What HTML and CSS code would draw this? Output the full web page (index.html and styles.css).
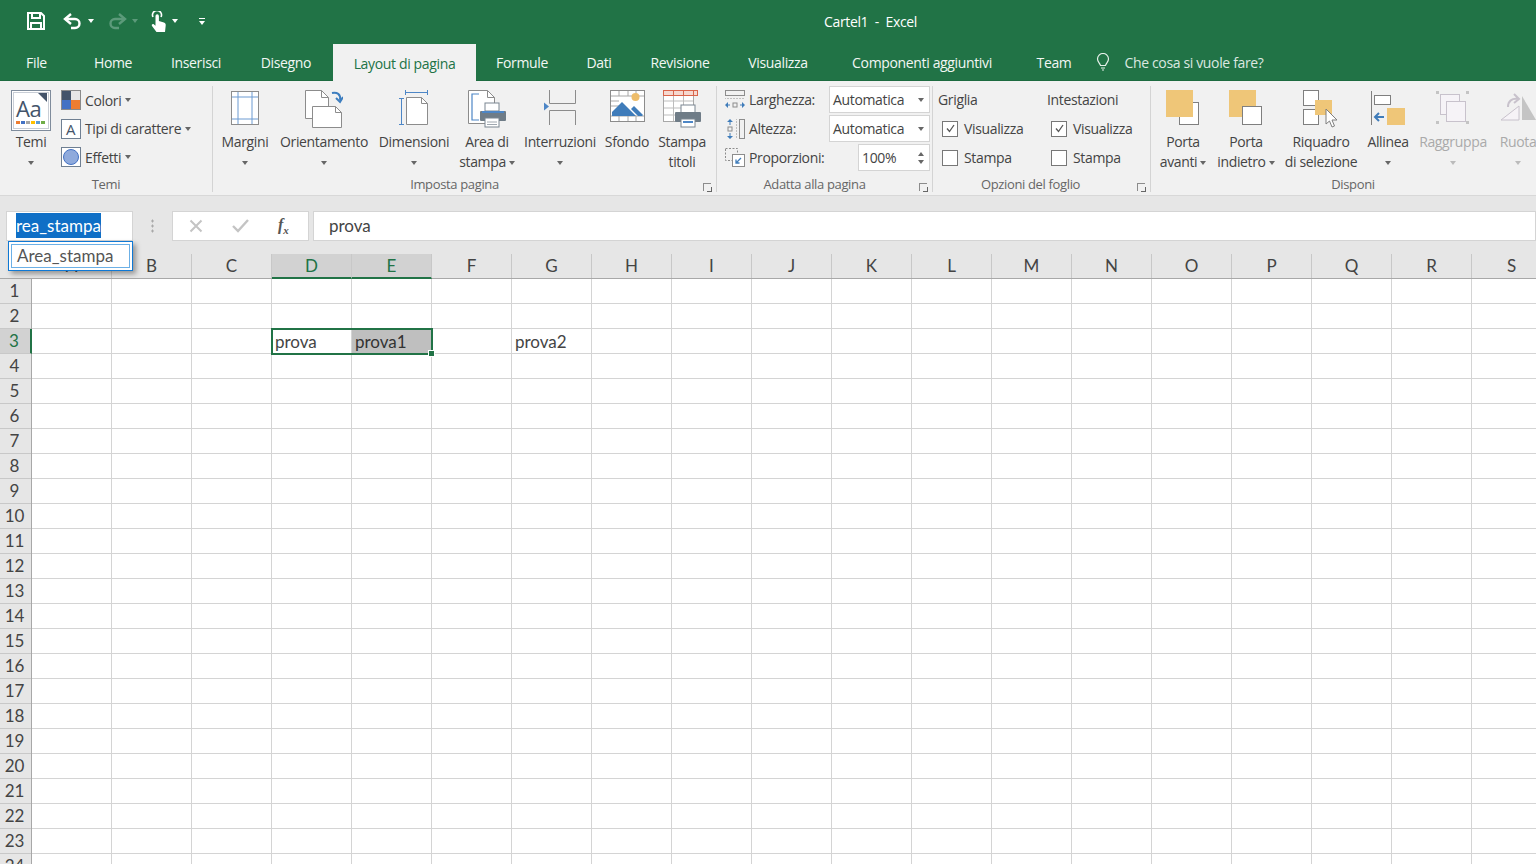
FILE: index.html
```html
<!DOCTYPE html>
<html lang="en">
	<head>
		<meta charset="UTF-8">
		<title>Cartel1 - Excel</title>
		<link rel="stylesheet" href="styles.css">
	</head>
	<body>
		<div class="title-bar">
			<div class="qat">
				<svg class="qat-save" width="18" height="18" viewBox="0 0 18 18" fill="none" stroke="#fff" stroke-width="2"><path d="M1 1h13l3 3v13H1z"/><path d="M5 1v5h8V1M4 17v-6h10v6"/></svg>
				<svg class="qat-undo" width="20" height="17" viewBox="0 0 20 17" fill="none" stroke="#fff" stroke-width="2.4"><path d="M8 1L2 6l6 5"/><path d="M2 6h10a4.500 4.500 0 0 1 0 9H8"/></svg>
				<span class="caret caret-white qat-caret"></span>
				<svg class="qat-redo" width="20" height="17" viewBox="0 0 20 17" fill="none" stroke="#5c9a7a" stroke-width="2.400"><path d="M12 1l6 5-6 5"/><path d="M18 6H8a4.500 4.500 0 0 0 0 9h4"/></svg>
				<span class="caret caret-dim qat-caret"></span>
				<svg class="qat-touch" width="17" height="21" viewBox="0 0 17 21"><path d="M3 6a4.500 4.500 0 1 1 8 0" fill="none" stroke="#fff" stroke-width="1.600"/><path d="M5.500 5a1.700 1.700 0 0 1 3.400 0v5l5 1.500c1.500.5 2 1.500 1.800 3L15 21H6.500L2 15c-.8-1.200.8-2.600 2-1.500l1.500 1.300z" fill="#fff"/></svg>
				<span class="caret caret-white qat-caret"></span>
				<div class="qat-custom"><span class="qat-custom-bar"></span><span class="caret caret-white"></span></div>
			</div>
			<div class="doc-title">Cartel1 &nbsp;-&nbsp; Excel</div>
		</div>

		<div class="tab-bar">
			<div class="tab tab-file">File</div>
			<div class="tab tab-home">Home</div>
			<div class="tab tab-ins">Inserisci</div>
			<div class="tab tab-dis">Disegno</div>
			<div class="tab tab-active">Layout di pagina</div>
			<div class="tab tab-for">Formule</div>
			<div class="tab tab-dati">Dati</div>
			<div class="tab tab-rev">Revisione</div>
			<div class="tab tab-vis">Visualizza</div>
			<div class="tab tab-comp">Componenti aggiuntivi</div>
			<div class="tab tab-team">Team</div>
			<svg class="bulb" width="14" height="18" viewBox="0 0 14 18" fill="none" stroke="#e6f0ea" stroke-width="1.200"><path d="M4.500 12.500C4 10 1.500 9 1.500 6a5.500 5.500 0 0 1 11 0c0 3-2.500 4-3 6.500z"/><path d="M5 15h4M6 17h2"/></svg>
			<div class="tab tab-tell">Che cosa si vuole fare?</div>
		</div>

		<div class="ribbon">
			<div class="group group-temi">
				<div class="group-body">
					<div class="big-btn w-temi">
						<div class="big-icon">
							<svg width="40" height="41" viewBox="0 0 40 41"><rect x=".5" y=".5" width="39" height="40" fill="#fff" stroke="#7f8c9c"/><rect x="2.500" y="2.500" width="35" height="36" fill="#fff" stroke="#c9ced6"/><path d="M27 3h9v9z" fill="#44546a"/><text x="5" y="27" class="svg-aa">Aa</text><path d="M5 31h4v3H5z" fill="#ed7d31"/><path d="M10 31h4v3h-4z" fill="#4472c4"/><path d="M15 31h4v3h-4z" fill="#a5a5a5"/><path d="M20 31h4v3h-4z" fill="#ffc000"/><path d="M25 31h4v3h-4z" fill="#5b9bd5"/><path d="M30 31h4v3h-4z" fill="#70ad47"/></svg>
						</div>
						<div class="big-label">Temi</div>
						<div class="big-label"><span class="caret"></span></div>
					</div>
					<div class="small-col">
						<div class="small-row">
							<svg width="20" height="20" viewBox="0 0 20 20"><rect width="10" height="10" fill="#44546a"/><rect x="10" width="10" height="10" fill="#e7e6e6"/><rect y="10" width="10" height="10" fill="#4472c4"/><rect x="10" y="10" width="10" height="10" fill="#ed7d31"/><rect x=".5" y=".5" width="19" height="19" fill="none" stroke="#8a8a8a"/></svg>
							<span>Colori</span><span class="caret"></span>
						</div>
						<div class="small-row">
							<svg width="20" height="20" viewBox="0 0 20 20"><rect x=".5" y=".5" width="19" height="19" fill="#fff" stroke="#6f7f92"/><text x="5" y="16" class="svg-a">A</text></svg>
							<span>Tipi di carattere</span><span class="caret"></span>
						</div>
						<div class="small-row">
							<svg width="20" height="20" viewBox="0 0 20 20"><rect x=".5" y=".5" width="19" height="19" fill="#fff" stroke="#6f7f92"/><circle cx="10" cy="10" r="7.500" fill="#8faadc" stroke="#4472c4"/></svg>
							<span>Effetti</span><span class="caret"></span>
						</div>
					</div>
				</div>
				<div class="group-label">Temi</div>
			</div>

			<div class="group group-page">
				<div class="group-body">
					<div class="big-btn w-margini">
						<div class="big-icon">
							<svg width="30" height="36" viewBox="0 0 30 36" fill="none"><rect x="1.500" y="1.500" width="27" height="33" fill="#fff" stroke="#8c8c8c"/><path d="M8 2v32M22 2v32M2 7h26M2 29h26" stroke="#6d9bd2"/></svg>
						</div>
						<div class="big-label">Margini</div>
						<div class="big-label"><span class="caret"></span></div>
					</div>
					<div class="big-btn w-orient">
						<div class="big-icon">
							<svg width="38" height="38" viewBox="0 0 38 38" fill="none" stroke="#8c8c8c"><path d="M.5.500h16l7 7v21H.5z" fill="#fff"/><path d="M16.500.5v7h7"/><path d="M7.500 16.500h23l6 6v15h-29z" fill="#fff"/><path d="M30.500 16.500v6h6"/><path d="M27 3c5-1 9 1 8 7" stroke="#3d7ebf" stroke-width="2"/><path d="M31 8l4 4 3-5" stroke="#3d7ebf" stroke-width="2"/></svg>
						</div>
						<div class="big-label">Orientamento</div>
						<div class="big-label"><span class="caret"></span></div>
					</div>
					<div class="big-btn w-dim">
						<div class="big-icon">
							<svg width="30" height="36" viewBox="0 0 30 36" fill="none"><path d="M7.500 7.500h15l6 6v21h-21z" fill="#fff" stroke="#8c8c8c"/><path d="M22.500 7.500v6h6" stroke="#8c8c8c"/><path d="M6 2.500h23M6.500 0v5M28.500 0v5M2.500 8v27M0 8.500h5M0 34.500h5" stroke="#4d86c6"/></svg>
						</div>
						<div class="big-label">Dimensioni</div>
						<div class="big-label"><span class="caret"></span></div>
					</div>
					<div class="big-btn w-area">
						<div class="big-icon">
							<svg width="38" height="38" viewBox="0 0 38 38" fill="none"><path d="M.5.500h19l7 7v26H.5z" fill="#fff" stroke="#8c8c8c"/><path d="M19.500.5v7h7" stroke="#8c8c8c"/><path d="M11 4H4v26h7" stroke="#4d86c6" stroke-width="1.200"/><rect x="17" y="13" width="14" height="8" fill="#fff" stroke="#7a8691"/><path d="M13 21h24a1 1 0 0 1 1 1v8a1 1 0 0 1-1 1H13a1 1 0 0 1-1-1v-8a1 1 0 0 1 1-1z" fill="#6f7c87"/><rect x="14" y="21" width="22" height="2" fill="#4d86c6"/><rect x="17" y="28" width="14" height="9" fill="#fff" stroke="#7a8691"/><path d="M19 32h10M19 34.500h10" stroke="#a0a8b0"/></svg>
						</div>
						<div class="big-label">Area di</div>
						<div class="big-label">stampa<span class="caret caret-inline"></span></div>
					</div>
					<div class="big-btn w-inter">
						<div class="big-icon">
							<svg width="32" height="35" viewBox="0 0 32 35" fill="none" stroke="#8c8c8c"><path d="M5.500 0v13.500h26V0" stroke-width="1"/><path d="M5.500 35V20.500h26V35"/><path d="M0 12.500l5 4-5 4z" fill="#4d86c6" stroke="none"/></svg>
						</div>
						<div class="big-label">Interruzioni</div>
						<div class="big-label"><span class="caret"></span></div>
					</div>
					<div class="big-btn w-sfondo">
						<div class="big-icon">
							<svg width="35" height="33" viewBox="0 0 35 33" fill="none"><rect x=".5" y=".5" width="34" height="31" fill="#fff" stroke="#8c8c8c"/><path d="M1 6h33M1 26h33M9 1v5M18 1v5M26 1v5M9 26v5M18 26v5M26 26v5M1 11h8M1 16h8" stroke="#a8a8a8"/><path d="M2 26v-4L12 12l11 11 3 3z" fill="#3f7cba"/><path d="M21 19l3-3 9 9-1 1h-4z" fill="#3f7cba"/><circle cx="25.500" cy="7" r="4" fill="#eebd6a"/></svg>
						</div>
						<div class="big-label">Sfondo</div>
					</div>
					<div class="big-btn w-titoli">
						<div class="big-icon">
							<svg width="38" height="38" viewBox="0 0 38 38" fill="none"><rect x=".5" y=".5" width="30" height="31" fill="#fff" stroke="#a8a8a8"/><path d="M1 11h29M1 18h29M1 25h29M10.500 6v25M20.500 6v25" stroke="#bdbdbd"/><rect x=".5" y=".5" width="34" height="5" fill="#f6d9d0" stroke="#d9654b"/><path d="M10.500 1v5M20.500 1v5M30.500 1v5" stroke="#d9654b"/><rect x="18" y="15" width="14" height="8" fill="#fff" stroke="#7a8691"/><path d="M13 22h24a1 1 0 0 1 1 1v8a1 1 0 0 1-1 1H13a1 1 0 0 1-1-1v-8a1 1 0 0 1 1-1z" fill="#6f7c87"/><rect x="18" y="29" width="14" height="8" fill="#fff" stroke="#7a8691"/><path d="M20 32h10" stroke="#4d86c6" stroke-width="2"/></svg>
						</div>
						<div class="big-label">Stampa</div>
						<div class="big-label">titoli</div>
					</div>
				</div>
				<div class="group-label">Imposta pagina</div>
				<span class="launcher"></span>
			</div>

			<div class="group group-fit">
				<div class="fit-grid">
					<svg width="20" height="20" viewBox="0 0 20 20" fill="none"><rect x=".5" y=".5" width="19" height="5" stroke="#8c8c8c"/><path d="M0 8v1M3 8v1M6 8v1M9 8v1M12 8v1M15 8v1M18 8v1" stroke="#8c8c8c"/><path d="M0 15l3-3v6zM20 15l-3-3v6z" fill="#3f7cba"/><path d="M3 15h2M15 15h2" stroke="#3f7cba"/><rect x="8" y="13" width="4" height="4" stroke="#8c8c8c"/></svg>
					<span>Larghezza:</span>
					<div class="combo"><span>Automatica</span><span class="caret"></span></div>
					<svg width="20" height="20" viewBox="0 0 20 20" fill="none"><rect x="14.500" y=".5" width="5" height="19" stroke="#8c8c8c"/><path d="M11 0h1M11 3h1M11 6h1M11 9h1M11 12h1M11 15h1M11 18h1" stroke="#8c8c8c"/><path d="M5 0L2 3h6zM5 20l-3-3h6z" fill="#3f7cba"/><path d="M5 3v3M5 14v3" stroke="#3f7cba"/><rect x="3" y="8" width="4" height="4" stroke="#8c8c8c"/></svg>
					<span>Altezza:</span>
					<div class="combo"><span>Automatica</span><span class="caret"></span></div>
					<svg width="20" height="20" viewBox="0 0 20 20" fill="none"><rect x=".5" y=".5" width="12" height="12" stroke="#8c8c8c" stroke-dasharray="2 1.500"/><rect x="7.500" y="6.500" width="12" height="12" fill="#fff" stroke="#8c8c8c"/><path d="M16 10l-5 5M11 11.500V15h3.500" stroke="#3f7cba" stroke-width="1.300"/></svg>
					<span>Proporzioni:</span>
					<div class="combo combo-spin"><span>100%</span><span class="spin"><span class="caret caret-up"></span><span class="caret"></span></span></div>
				</div>
				<div class="group-label">Adatta alla pagina</div>
				<span class="launcher"></span>
			</div>

			<div class="group group-sheet">
				<div class="sheet-opts">
					<div class="opt-col opt-griglia">
						<div class="opt-title">Griglia</div>
						<div class="opt-row"><span class="check check-on"><svg width="13" height="13" viewBox="0 0 13 13" fill="none" stroke="#555" stroke-width="1.300"><path d="M3 6.500l2.500 3L10 3"/></svg></span>Visualizza</div>
						<div class="opt-row"><span class="check"></span>Stampa</div>
					</div>
					<div class="opt-col opt-intest">
						<div class="opt-title">Intestazioni</div>
						<div class="opt-row"><span class="check check-on"><svg width="13" height="13" viewBox="0 0 13 13" fill="none" stroke="#555" stroke-width="1.300"><path d="M3 6.500l2.500 3L10 3"/></svg></span>Visualizza</div>
						<div class="opt-row"><span class="check"></span>Stampa</div>
					</div>
				</div>
				<div class="group-label">Opzioni del foglio</div>
				<span class="launcher"></span>
			</div>

			<div class="group group-arrange">
				<div class="group-body">
					<div class="big-btn w-avanti">
						<div class="big-icon">
							<svg width="34" height="36" viewBox="0 0 34 36" fill="none"><rect x="13.500" y="12.500" width="19" height="22" fill="#fff" stroke="#7f7f7f"/><rect width="27" height="27" y="0" fill="#efc678"/></svg>
						</div>
						<div class="big-label">Porta</div>
						<div class="big-label">avanti<span class="caret caret-inline"></span></div>
					</div>
					<div class="big-btn w-indietro">
						<div class="big-icon">
							<svg width="34" height="36" viewBox="0 0 34 36" fill="none"><rect width="27" height="27" fill="#efc678"/><rect x="13.500" y="16.500" width="19" height="18" fill="#fff" stroke="#7f7f7f"/></svg>
						</div>
						<div class="big-label">Porta</div>
						<div class="big-label">indietro<span class="caret caret-inline"></span></div>
					</div>
					<div class="big-btn w-riquadro">
						<div class="big-icon">
							<svg width="36" height="38" viewBox="0 0 36 38" fill="none"><rect x=".5" y=".5" width="15" height="15" fill="#fff" stroke="#7f7f7f"/><rect x=".5" y="19.500" width="15" height="15" fill="#fff" stroke="#7f7f7f"/><path d="M12 10h17v15H12z" fill="#efc678"/><path d="M23 19v15l3.500-3 2.500 6 2.500-1-2.500-6h5z" fill="#fff" stroke="#7f7f7f"/></svg>
						</div>
						<div class="big-label">Riquadro</div>
						<div class="big-label">di selezione</div>
					</div>
					<div class="big-btn w-allinea">
						<div class="big-icon">
							<svg width="34" height="36" viewBox="0 0 34 36" fill="none"><path d="M.5 1v34" stroke="#7f7f7f"/><rect x="3.500" y="5.500" width="16" height="9" fill="#fff" stroke="#7f7f7f"/><rect x="16" y="18" width="18" height="17" fill="#efc678"/><path d="M13 27H5M8 23l-4 4 4 4" stroke="#3f7cba" stroke-width="2"/></svg>
						</div>
						<div class="big-label">Allinea</div>
						<div class="big-label"><span class="caret"></span></div>
					</div>
					<div class="big-btn w-ragg disabled">
						<div class="big-icon">
							<svg width="36" height="36" viewBox="0 0 36 36" fill="none" stroke="#c8c2cc"><rect x="5.500" y="4.500" width="19" height="20" fill="#f6f3f7"/><rect x="11.500" y="11.500" width="19" height="20" fill="#f6f3f7"/><path d="M1 1h3v3H1zM31 1h3v3h-3zM1 31h3v3H1zM31 31h3v3h-3z" fill="#c4c4c4" stroke="none"/></svg>
						</div>
						<div class="big-label">Raggruppa</div>
						<div class="big-label"><span class="caret"></span></div>
					</div>
					<div class="big-btn w-ruota disabled">
						<div class="big-icon">
							<svg width="36" height="36" viewBox="0 0 36 36" fill="none"><path d="M1 30L19 16v14z" fill="#f6f3f7" stroke="#c8c2cc"/><path d="M22 6l14 24H22z" fill="#c4c4c4"/><path d="M8 17c0-6 4-9 10-8M14 4l5 5-5 4" stroke="#c8c2cc" stroke-width="2"/></svg>
						</div>
						<div class="big-label">Ruota</div>
						<div class="big-label"><span class="caret"></span></div>
					</div>
				</div>
				<div class="group-label">Disponi</div>
			</div>
		</div>

		<div class="formula-bar">
			<div class="name-box"><span class="name-sel">rea_stampa</span></div>
			<div class="grip"></div>
			<div class="fx-box">
				<svg width="14" height="14" viewBox="0 0 14 14" fill="none" stroke="#c4c4c4" stroke-width="2"><path d="M1.500 1.500l11 11M12.500 1.500l-11 11"/></svg>
				<svg width="17" height="14" viewBox="0 0 17 14" fill="none" stroke="#c4c4c4" stroke-width="2.400"><path d="M1 7l5 5L16 1"/></svg>
				<span class="fx">f<sub>x</sub></span>
			</div>
			<div class="formula-input">prova</div>
		</div>

		<div class="name-popup"><div class="name-popup-inner">Area_stampa</div></div>

		<div class="sheet">
			<div class="col-heads">
				<div class="corner"></div>
				<div class="col-head">A</div>
				<div class="col-head">B</div>
				<div class="col-head">C</div>
				<div class="col-head col-sel">D</div>
				<div class="col-head col-sel">E</div>
				<div class="col-head">F</div>
				<div class="col-head">G</div>
				<div class="col-head">H</div>
				<div class="col-head">I</div>
				<div class="col-head">J</div>
				<div class="col-head">K</div>
				<div class="col-head">L</div>
				<div class="col-head">M</div>
				<div class="col-head">N</div>
				<div class="col-head">O</div>
				<div class="col-head">P</div>
				<div class="col-head">Q</div>
				<div class="col-head">R</div>
				<div class="col-head">S</div>
			</div>
			<div class="sheet-main">
				<div class="row-heads">
					<div class="row-head">1</div>
					<div class="row-head">2</div>
					<div class="row-head row-sel">3</div>
					<div class="row-head">4</div>
					<div class="row-head">5</div>
					<div class="row-head">6</div>
					<div class="row-head">7</div>
					<div class="row-head">8</div>
					<div class="row-head">9</div>
					<div class="row-head">10</div>
					<div class="row-head">11</div>
					<div class="row-head">12</div>
					<div class="row-head">13</div>
					<div class="row-head">14</div>
					<div class="row-head">15</div>
					<div class="row-head">16</div>
					<div class="row-head">17</div>
					<div class="row-head">18</div>
					<div class="row-head">19</div>
					<div class="row-head">20</div>
					<div class="row-head">21</div>
					<div class="row-head">22</div>
					<div class="row-head">23</div>
					<div class="row-head">24</div>
				</div>
				<div class="cells">
					<div class="cell cell-d3">prova</div>
					<div class="cell cell-e3">prova1</div>
					<div class="cell cell-g3">prova2</div>
					<div class="selection"><span class="fill-handle"></span></div>
				</div>
			</div>
		</div>
	</body>
</html>
```

FILE: styles.css
```css
* {
    margin: 0;
    padding: 0;
    box-sizing: border-box;
}

body {
    font-family: 'Open Sans', 'Noto Sans', sans-serif;
    font-size: 14px;
    letter-spacing: -0.35px;
    color: #444;
    width: 1536px;
    height: 864px;
    overflow: hidden;
    position: relative;
    background: #fff;
}

svg {
    display: block;
    flex-shrink: 0;
}

/* carets */
.caret {
    display: inline-block;
    width: 0;
    height: 0;
    border-left: 3.5px solid transparent;
    border-right: 3.5px solid transparent;
    border-top: 4px solid #666;
}

.caret-white {
    border-top-color: #fff;
}

.caret-dim {
    border-top-color: #5c9a7a;
}

.caret-up {
    border-top: none;
    border-bottom: 4px solid #666;
}

.caret-inline {
    margin-left: 3px;
    vertical-align: 3px;
}

/* title bar */
.title-bar {
    height: 42px;
    background: #217346;
    color: #fff;
    display: flex;
    align-items: center;
}

.qat {
    display: flex;
    align-items: center;
    width: 210px;
    padding-left: 27px;
}

.qat-undo {
    margin-left: 18px;
}

.qat-redo {
    margin-left: 13px;
    margin-top: 1px;
}

.qat-touch {
    margin-left: 12px;
}

.qat-caret {
    margin-left: 5px;
}

.qat-custom {
    display: flex;
    flex-direction: column;
    align-items: center;
    gap: 2px;
    margin-left: 21px;
}

.qat-custom-bar {
    width: 6px;
    height: 1px;
    background: #fff;
}

.doc-title {
    width: 1496px;
    text-align: center;
}

/* tabs */
.tab-bar {
    height: 39px;
    background: #217346;
    display: flex;
    align-items: stretch;
    color: #f2f7f4;
    border-bottom: 1px solid #1d6b40;
}

.tab {
    display: flex;
    align-items: center;
    justify-content: center;
    padding-top: 2px;
}

.tab-file { width: 73px; }
.tab-home { width: 80px; }
.tab-ins { width: 86px; }
.tab-dis { width: 94px; }
.tab-for { width: 92px; }
.tab-dati { width: 62px; }
.tab-rev { width: 100px; }
.tab-vis { width: 96px; }
.tab-comp { width: 192px; }
.tab-team { width: 72px; }
.tab-tell { width: 152px; color: #dbe8e0; margin-left: 8px; }

.tab-active {
    width: 143px;
    margin-top: 2px;
    margin-bottom: -1px;
    background: #f1f1f1;
    color: #217346;
}

.bulb {
    align-self: center;
    margin: 2px 0 0 6px;
}

/* ribbon */
.ribbon {
    height: 115px;
    background: #f1f1f1;
    border-bottom: 1px solid #d8d8d8;
    display: flex;
    overflow: hidden;
}

.group {
    position: relative;
    flex: none;
    height: 106px;
    margin-top: 5px;
    border-right: 1px solid #d4d4d4;
    display: flex;
    flex-direction: column;
}

.group-temi { width: 213px; }
.group-page { width: 504px; padding-left: 4px; }
.group-fit { width: 216px; }
.group-sheet { width: 218px; }
.group-arrange { width: 400px; padding-left: 4px; border-right: none; }

.group-body {
    height: 91px;
    display: flex;
}

.group-label {
    height: 15px;
    line-height: 15px;
    text-align: center;
    font-size: 13px;
    color: #666;
}

.group-page .group-label { padding-right: 24px; }
.group-fit .group-label { padding-right: 20px; }
.group-sheet .group-label { padding-right: 22px; }

.launcher {
    position: absolute;
    right: 5px;
    bottom: 1px;
    width: 8px;
    height: 8px;
    border-left: 1px solid #8c8c8c;
    border-top: 1px solid #8c8c8c;
}

.launcher::after {
    content: '';
    position: absolute;
    right: -1px;
    bottom: -1px;
    width: 4px;
    height: 4px;
    border-right: 1px solid #666;
    border-bottom: 1px solid #666;
}

.big-btn {
    flex: none;
    display: flex;
    flex-direction: column;
    align-items: center;
}

.big-icon {
    height: 46px;
    display: flex;
    justify-content: center;
    padding-top: 4px;
}

.big-label {
    height: 20px;
    line-height: 20px;
    white-space: nowrap;
}

.big-label > .caret:only-child {
    vertical-align: 2px;
}

.disabled {
    color: #aaa;
}

.disabled .caret {
    border-top-color: #bbb;
}

.w-temi { width: 62px; }
.w-margini { width: 56px; }
.w-orient { width: 102px; }
.w-dim { width: 78px; }
.w-area { width: 68px; }
.w-inter { width: 78px; }
.w-sfondo { width: 56px; }
.w-titoli { width: 54px; }
.w-avanti { width: 56px; }
.w-indietro { width: 70px; }
.w-riquadro { width: 80px; }
.w-allinea { width: 54px; }
.w-ragg { width: 76px; }
.w-ruota { width: 54px; }

.svg-aa {
    font-family: 'Open Sans', sans-serif;
    font-size: 22px;
    fill: #44546a;
    letter-spacing: -0.5px;
}

.svg-a {
    font-family: 'Open Sans', sans-serif;
    font-size: 15px;
    fill: #44546a;
}

.small-col {
    margin-left: -1px;
    display: flex;
    flex-direction: column;
}

.small-row {
    height: 28.5px;
    display: flex;
    align-items: center;
    gap: 4px;
}

/* scale to fit */
.fit-grid {
    height: 91px;
    display: grid;
    grid-template-columns: 20px 76px 101px;
    grid-template-rows: 27px 27px 27px;
    row-gap: 2px;
    align-items: center;
    column-gap: 4px;
    padding-left: 8px;
}

.combo {
    height: 27px;
    background: #fff;
    border: 1px solid #d4d4d4;
    display: flex;
    align-items: center;
    justify-content: space-between;
    padding: 0 5px 0 3px;
}

.combo-spin {
    margin-left: 29px;
}

.spin {
    display: flex;
    flex-direction: column;
    gap: 4px;
}

/* sheet options */
.sheet-opts {
    height: 91px;
    display: flex;
    padding-left: 5px;
}

.opt-griglia { width: 109px; }

.opt-intest {
    width: 100px;
}

.opt-title {
    height: 28px;
    line-height: 28px;
}

.opt-row {
    height: 29px;
    display: flex;
    align-items: center;
    gap: 6px;
    padding-left: 4px;
}

.check {
    width: 16px;
    height: 16px;
    background: #fff;
    border: 1px solid #777;
    display: flex;
    align-items: center;
    justify-content: center;
}

/* formula bar */
.formula-bar {
    height: 58px;
    background: #e6e6e6;
    display: flex;
    padding: 15px 0 13px 6px;
    font-family: Lato, sans-serif;
    font-size: 17px;
    letter-spacing: 0;
    color: #444;
}

.name-box {
    width: 127px;
    background: #fff;
    border: 1px solid #d4d4d4;
    padding-left: 9px;
    line-height: 28px;
}

.name-sel {
    background: #0f6fc6;
    color: #fff;
    display: inline-block;
    height: 25px;
    line-height: 25px;
}

.grip {
    width: 39px;
    background: radial-gradient(circle, #a8a8a8 1px, transparent 1.3px) center / 3px 5px no-repeat;
    background-size: 3px 5px;
    background-repeat: repeat-y;
    background-position: center;
    margin: 8px 0;
}

.fx-box {
    width: 137px;
    background: #fff;
    border: 1px solid #d4d4d4;
    display: flex;
    align-items: center;
    padding-left: 16px;
    gap: 29px;
}

.fx {
    font-family: 'Liberation Serif', serif;
    font-style: italic;
    font-weight: bold;
    font-size: 16px;
    color: #555;
}

.fx sub {
    font-size: 11px;
}

.formula-input {
    flex: 1;
    margin-left: 4px;
    background: #fff;
    border: 1px solid #d4d4d4;
    padding-left: 15px;
    line-height: 28px;
}

/* name box dropdown */
.name-popup {
    position: absolute;
    left: 8px;
    top: 241px;
    width: 125px;
    height: 30px;
    background: #fff;
    border: 1px solid #0f78d4;
    padding: 2px;
    box-shadow: 3px 3px 5px rgba(0, 0, 0, 0.35);
    font-family: Lato, sans-serif;
    font-size: 17px;
    letter-spacing: 0;
    color: #555;
    z-index: 2;
}

.name-popup-inner {
    height: 24px;
    border: 1px solid #6cb0e6;
    line-height: 22px;
    padding-left: 5px;
}

/* grid */
.sheet {
    font-family: Lato, sans-serif;
    font-size: 17px;
    letter-spacing: 0;
    color: #444;
}

.col-heads {
    height: 25px;
    display: flex;
    background: #e6e6e6;
    border-bottom: 1px solid #a8a8a8;
}

.corner {
    width: 32px;
    flex: none;
}

.col-head {
    width: 80px;
    flex: none;
    text-align: center;
    line-height: 24px;
    border-right: 1px solid #c8c8c8;
}

.col-sel {
    background: #d2d2d2;
    color: #217346;
    border-bottom: 2px solid #217346;
    height: 25px;
}

.sheet-main {
    display: flex;
}

.row-heads {
    width: 32px;
    flex: none;
    background: #e6e6e6;
    border-right: 1px solid #a8a8a8;
}

.row-head {
    height: 25px;
    line-height: 24px;
    text-align: center;
    padding-right: 2px;
    border-bottom: 1px solid #c8c8c8;
}

.row-sel {
    background: #d2d2d2;
    color: #217346;
    border-right: 2px solid #217346;
    margin-right: -1px;
}

.cells {
    flex: 1;
    height: 600px;
    display: grid;
    grid-template-columns: repeat(19, 80px);
    grid-template-rows: repeat(24, 25px);
    background-image:
        linear-gradient(to right, transparent 79px, #d4d4d4 79px),
        linear-gradient(to bottom, transparent 24px, #d4d4d4 24px);
    background-size: 80px 100%, 100% 25px;
}

.cell {
    grid-row: 3;
    padding-left: 3px;
    line-height: 26px;
    height: 24px;
    white-space: nowrap;
}

.cell-d3 { grid-column: 4; }

.cell-e3 {
    grid-column: 5;
    background: #bfbfbf;
    margin-right: 1px;
    color: #333;
}

.cell-g3 { grid-column: 7; }

.selection {
    grid-row: 3;
    grid-column: 4 / span 2;
    position: relative;
    margin: -1px -1px 0 -1px;
    height: 27px;
    border: 2px solid #217346;
}

.fill-handle {
    position: absolute;
    right: -4px;
    bottom: -4px;
    width: 7px;
    height: 7px;
    background: #217346;
    border: 1px solid #fff;
}
```
